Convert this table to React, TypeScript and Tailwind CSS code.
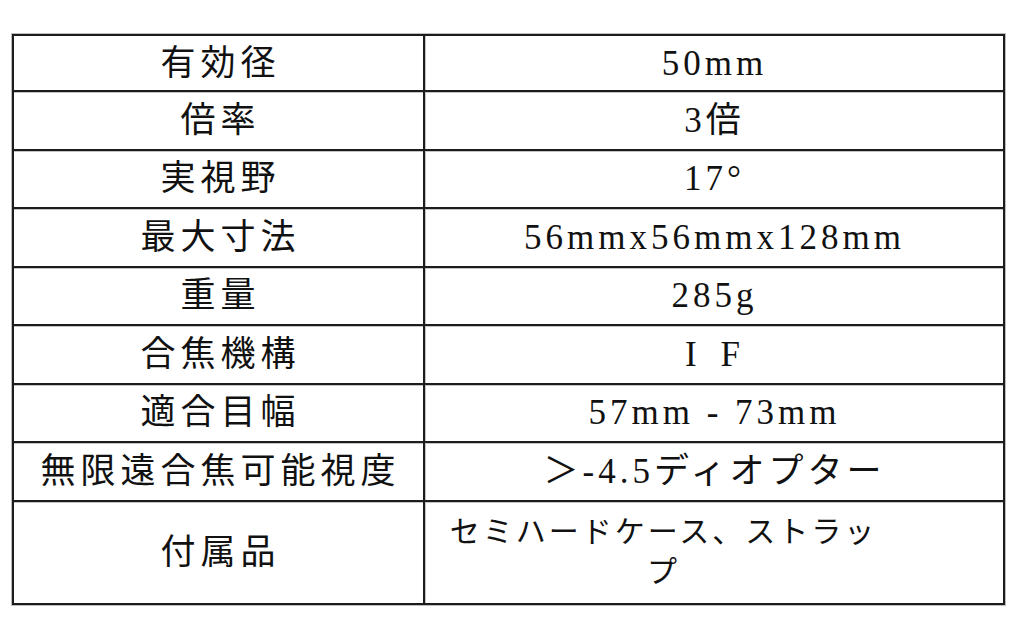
import type { ReactNode } from 'react'

type Row = { label: string; value: ReactNode; height: string }

const rows: Row[] = [
  { label: '有効径', value: '50mm', height: 'h-[56px]' },
  { label: '倍率', value: '3倍', height: 'h-[58.5px]' },
  { label: '実視野', value: '17°', height: 'h-[58.5px]' },
  { label: '最大寸法', value: '56mmx56mmx128mm', height: 'h-[58.5px]' },
  { label: '重量', value: '285g', height: 'h-[58.5px]' },
  {
    label: '合焦機構',
    value: (
      <>
        <span>I</span>
        <span className="ml-[20px]">F</span>
      </>
    ),
    height: 'h-[58.5px]',
  },
  { label: '適合目幅', value: '57mm - 73mm', height: 'h-[58.5px]' },
  { label: '無限遠合焦可能視度', value: '＞-4.5ディオプター', height: 'h-[58.5px]' },
  {
    label: '付属品',
    value: (
      <span className="block text-[30px] leading-[40px] tracking-[3px] pr-[102px]">
        セミハードケース、ストラッ
        <br />プ
      </span>
    ),
    height: 'h-[101px]',
  },
]

export default function App() {
  return (
    <div
      className="w-[1024px] h-[629px] bg-white pt-[33px] pl-[11px] text-[#111] text-[35px] tracking-[4px]"
      style={{ fontFamily: '"Liberation Serif", "Noto Sans CJK JP", serif' }}
    >
      <div className="w-[995px] border border-[#bdbdbd]">
        <div className="border-2 border-[#1c1c1c]">
          {rows.map((row, i) => {
            const last = i === rows.length - 1
            return (
              <div
                key={row.label}
                className={`grid grid-cols-[411px_1fr] ${row.height} ${
                  last ? '' : 'border-b-2 border-[#1c1c1c] shadow-[0_1px_0_#c4c4c4]'
                }`}
              >
                <div className="flex items-center justify-center border-r-2 border-[#1c1c1c] shadow-[1px_0_0_#c4c4c4]">
                  <span className="leading-none tracking-[5px] pl-[4px]">{row.label}</span>
                </div>
                <div className="flex items-center justify-center text-center leading-none pl-px">
                  {row.value}
                </div>
              </div>
            )
          })}
        </div>
      </div>
    </div>
  )
}
